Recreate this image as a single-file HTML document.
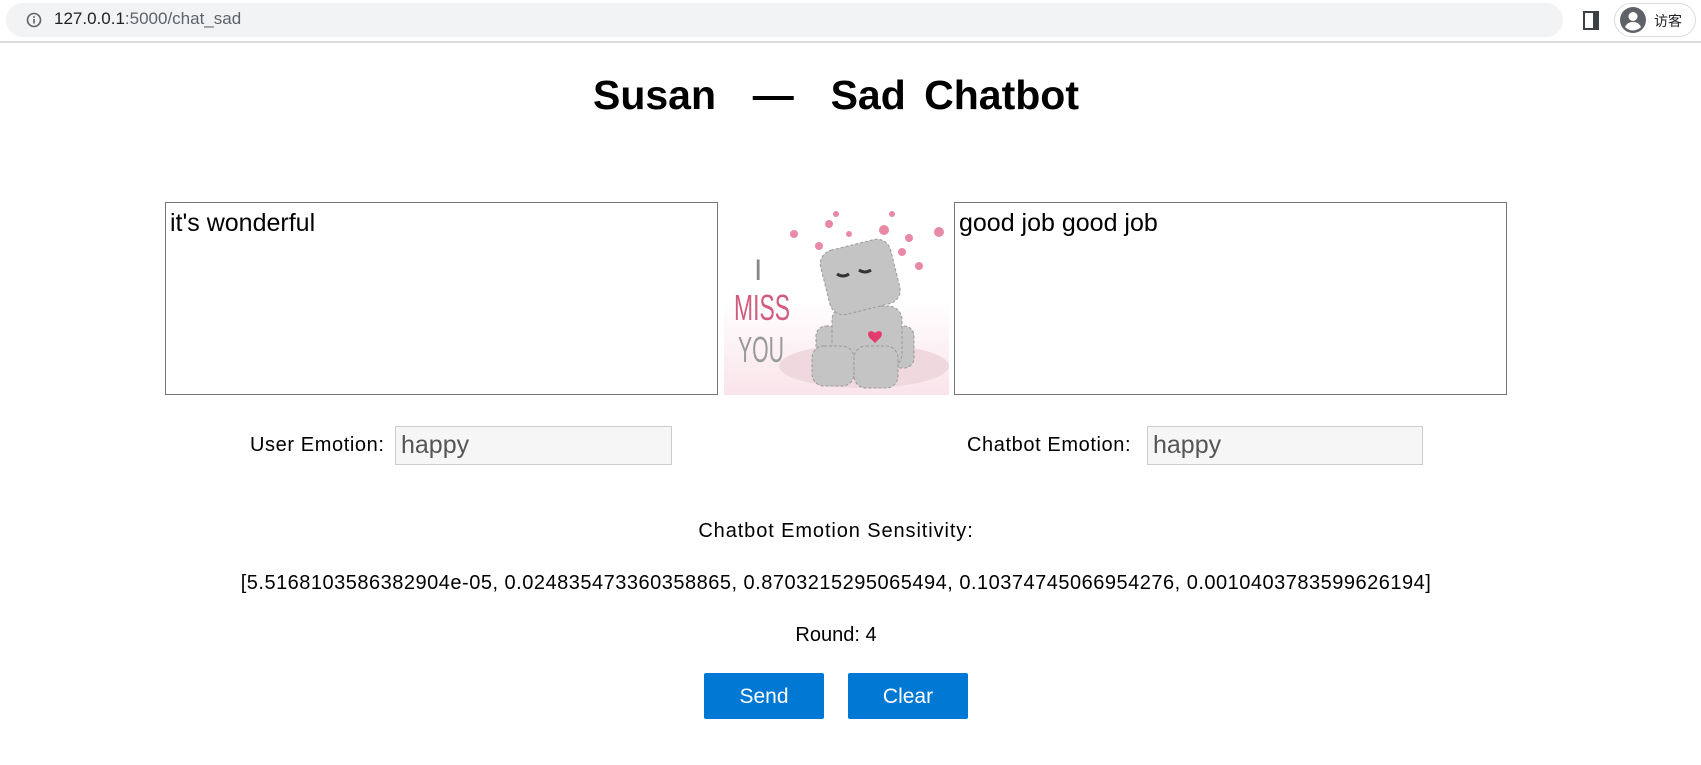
<!DOCTYPE html>
<html><head><meta charset="utf-8"><style>
*{box-sizing:border-box;margin:0;padding:0}
body{width:1701px;height:765px;background:#fff;font-family:"Liberation Sans","Noto Sans CJK SC",sans-serif;position:relative;overflow:hidden;color:#000}
.a{position:absolute}
.bar{left:0;top:0;width:1701px;height:43px;background:#fff;border-bottom:2px solid #dcdcdc}
.url{left:6px;top:3px;width:1557px;height:34px;border-radius:17px;background:#f1f3f4}
.ta{border:1px solid #767676;background:#fff;font-size:25px;padding:6px 4px;line-height:28px}
.inp{border:1px solid #ccc;background:#f6f6f6;font-size:25px;color:#555;padding:3px 5px;line-height:30px}
.lbl{font-size:20px;letter-spacing:0.6px}
.c{left:0;width:1672px;text-align:center;font-size:20px}
.btn{background:#0078d4;color:#fff;font-size:21px;text-align:center;line-height:47px;height:46px;border-radius:2px}
</style></head><body>
<div class="a bar"></div>
<div class="a url"></div>
<svg class="a" style="left:26px;top:12px" width="16" height="16" viewBox="0 0 16 16"><circle cx="8" cy="8" r="6.5" fill="none" stroke="#5f6368" stroke-width="1.6"/><rect x="7.2" y="7" width="1.6" height="4.5" fill="#5f6368"/><rect x="7.2" y="4.2" width="1.6" height="1.6" fill="#5f6368"/></svg>
<div class="a" style="left:54px;top:9px;font-size:17px;color:#202124">127.0.0.1<span style="color:#5f6368">:5000/chat_sad</span></div>
<div class="a" style="left:1583px;top:11px;width:16px;height:19px;border:2px solid #3c4043;border-right-width:6px"></div>
<div class="a" style="left:1614px;top:3px;width:82px;height:34px;border:1px solid #dadce0;border-radius:17px"></div>
<svg class="a" style="left:1619px;top:6px" width="28" height="28" viewBox="0 0 28 28"><circle cx="14" cy="14" r="13" fill="#5f6368"/><circle cx="14" cy="10.5" r="4.5" fill="#fff"/><path d="M6 21c2-4 5-5 8-5s6 1 8 5c-2 2-5 3.5-8 3.5s-6-1.5-8-3.5z" fill="#fff"/></svg>
<div class="a" style="left:1654px;top:11px;font-size:14px;color:#202124">访客</div>

<div class="a" style="left:0;width:1672px;top:72px;text-align:center;font-size:41px;font-weight:bold;word-spacing:7px">Susan &nbsp;— &nbsp;Sad Chatbot</div>

<div class="a ta" style="left:165px;top:202px;width:553px;height:193px">it's wonderful</div>
<div class="a ta" style="left:954px;top:202px;width:553px;height:193px">good job good job</div>

<svg class="a" style="left:724px;top:206px" width="225" height="189" viewBox="0 0 225 189">
<defs><linearGradient id="g" x1="0" y1="0" x2="0" y2="1"><stop offset="0.5" stop-color="#fff"/><stop offset="1" stop-color="#f9e4ea"/></linearGradient></defs>
<rect width="225" height="189" fill="url(#g)"/>
<ellipse cx="140" cy="160" rx="85" ry="22" fill="#efd8de"/>
<g fill="#e88aa5"><circle cx="70" cy="28" r="4"/><circle cx="105" cy="18" r="4"/><circle cx="125" cy="28" r="3"/><circle cx="160" cy="24" r="5"/><circle cx="185" cy="32" r="4"/><circle cx="215" cy="26" r="5"/><circle cx="95" cy="40" r="4"/><circle cx="135" cy="42" r="3"/><circle cx="178" cy="46" r="4"/><circle cx="195" cy="60" r="4"/><circle cx="112" cy="8" r="3"/><circle cx="168" cy="8" r="3"/></g>
<text x="30" y="74" font-family="Liberation Sans,sans-serif" font-size="30" fill="#888">I</text>
<text x="10" y="114" font-family="Liberation Sans,sans-serif" font-size="36" fill="#d25c7e" textLength="56" lengthAdjust="spacingAndGlyphs">MISS</text>
<text x="14" y="156" font-family="Liberation Sans,sans-serif" font-size="36" fill="#999" textLength="46" lengthAdjust="spacingAndGlyphs">YOU</text>
<g fill="#c4c4c4" stroke="#999" stroke-width="1" stroke-dasharray="3 2">
<rect x="92" y="120" width="40" height="42" rx="10"/>
<rect x="145" y="120" width="45" height="42" rx="10"/>
<rect x="108" y="100" width="70" height="62" rx="14"/>
<rect x="88" y="140" width="42" height="40" rx="12"/>
<rect x="130" y="140" width="44" height="42" rx="12"/>
<rect x="100" y="38" width="72" height="66" rx="14" transform="rotate(-14 136 70)"/>
</g>
<path d="M113 68q6 4 12 0M135 64q6 4 12 0" stroke="#333" stroke-width="3" fill="none"/>
<path d="M148 134c-8-6-2-12 3-7 5-5 11 1 3 7l-3 3z" fill="#e33b6c"/>
</svg>

<div class="a lbl" style="left:250px;top:434px">User Emotion:</div>
<div class="a inp" style="left:395px;top:426px;width:277px;height:39px">happy</div>
<div class="a lbl" style="left:967px;top:434px">Chatbot Emotion:</div>
<div class="a inp" style="left:1147px;top:426px;width:276px;height:39px">happy</div>

<div class="a c" style="top:520px;letter-spacing:0.9px">Chatbot Emotion Sensitivity:</div>
<div class="a c" style="top:572px;letter-spacing:0.5px">[5.5168103586382904e-05, 0.024835473360358865, 0.8703215295065494, 0.10374745066954276, 0.0010403783599626194]</div>
<div class="a c" style="top:624px">Round: 4</div>

<div class="a btn" style="left:704px;top:673px;width:120px">Send</div>
<div class="a btn" style="left:848px;top:673px;width:120px">Clear</div>
</body></html>
